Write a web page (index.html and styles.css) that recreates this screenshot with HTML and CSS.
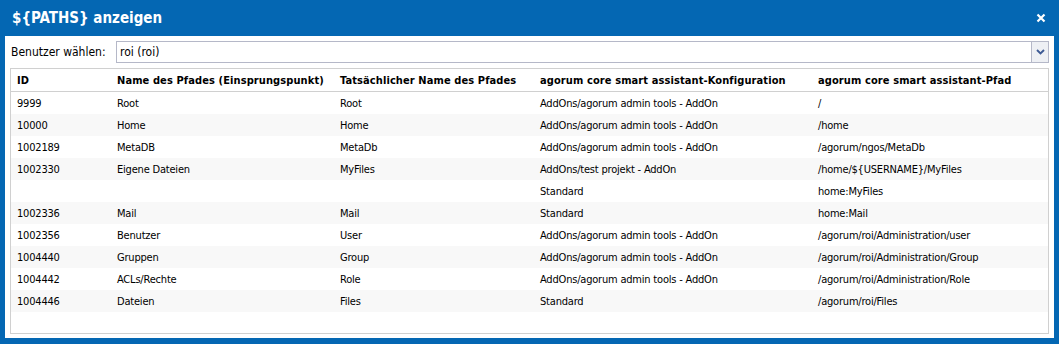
FILE: index.html
```html
<!DOCTYPE html>
<html lang="de">
<head>
<meta charset="utf-8">
<title>${PATHS} anzeigen</title>
<link rel="stylesheet" href="styles.css">
</head>
<body>
<div class="window">
  <div class="titlebar">
    <span class="title">${PATHS} anzeigen</span>
    <span class="close" aria-label="Schließen">
      <svg width="10" height="10" viewBox="0 0 10 10"><path d="M1.5 1.5 L8.5 8.5 M8.5 1.5 L1.5 8.5" stroke="#fff" stroke-width="2.2" stroke-linecap="butt"/></svg>
    </span>
  </div>
  <div class="panel">
    <div class="userrow">
      <label class="userlabel">Benutzer wählen:</label>
      <div class="combo">
        <span class="combo-value">roi (roi)</span>
        <span class="trigger">
          <svg width="9" height="6" viewBox="0 0 9 6"><path d="M1 1 L4.5 4.5 L8 1" fill="none" stroke="#3d5a94" stroke-width="1.9"/></svg>
        </span>
      </div>
    </div>
    <div class="grid">
      <div class="row head">
        <div class="cell">ID</div>
        <div class="cell">Name des Pfades (Einsprungspunkt)</div>
        <div class="cell">Tatsächlicher Name des Pfades</div>
        <div class="cell">agorum core smart assistant-Konfiguration</div>
        <div class="cell">agorum core smart assistant-Pfad</div>
      </div>
      <div class="row">
        <div class="cell">9999</div><div class="cell">Root</div><div class="cell">Root</div><div class="cell">AddOns/agorum admin tools - AddOn</div><div class="cell">/</div>
      </div>
      <div class="row alt">
        <div class="cell">10000</div><div class="cell">Home</div><div class="cell">Home</div><div class="cell">AddOns/agorum admin tools - AddOn</div><div class="cell">/home</div>
      </div>
      <div class="row">
        <div class="cell">1002189</div><div class="cell">MetaDB</div><div class="cell">MetaDb</div><div class="cell">AddOns/agorum admin tools - AddOn</div><div class="cell">/agorum/ngos/MetaDb</div>
      </div>
      <div class="row alt">
        <div class="cell">1002330</div><div class="cell">Eigene Dateien</div><div class="cell">MyFiles</div><div class="cell">AddOns/test projekt - AddOn</div><div class="cell">/home/${USERNAME}/MyFiles</div>
      </div>
      <div class="row">
        <div class="cell"></div><div class="cell"></div><div class="cell"></div><div class="cell">Standard</div><div class="cell">home:MyFiles</div>
      </div>
      <div class="row alt">
        <div class="cell">1002336</div><div class="cell">Mail</div><div class="cell">Mail</div><div class="cell">Standard</div><div class="cell">home:Mail</div>
      </div>
      <div class="row">
        <div class="cell">1002356</div><div class="cell">Benutzer</div><div class="cell">User</div><div class="cell">AddOns/agorum admin tools - AddOn</div><div class="cell">/agorum/roi/Administration/user</div>
      </div>
      <div class="row alt">
        <div class="cell">1004440</div><div class="cell">Gruppen</div><div class="cell">Group</div><div class="cell">AddOns/agorum admin tools - AddOn</div><div class="cell">/agorum/roi/Administration/Group</div>
      </div>
      <div class="row">
        <div class="cell">1004442</div><div class="cell">ACLs/Rechte</div><div class="cell">Role</div><div class="cell">AddOns/agorum admin tools - AddOn</div><div class="cell">/agorum/roi/Administration/Role</div>
      </div>
      <div class="row alt">
        <div class="cell">1004446</div><div class="cell">Dateien</div><div class="cell">Files</div><div class="cell">Standard</div><div class="cell">/agorum/roi/Files</div>
      </div>
    </div>
  </div>
</div>
</body>
</html>
```

FILE: styles.css
```css
html, body {
  margin: 0;
  padding: 0;
}
body {
  font-family: "DejaVu Sans Condensed", "DejaVu Sans", sans-serif;
  font-stretch: semi-condensed;
  color: #000;
  background: #fff;
}
.window {
  width: 1059px;
  height: 344px;
  background: #0467b3;
  display: flex;
  flex-direction: column;
  box-sizing: border-box;
}
.titlebar {
  height: 36px;
  flex: 0 0 36px;
  display: flex;
  align-items: center;
  justify-content: space-between;
  padding: 0 12px 0 12px;
  box-sizing: border-box;
}
.title {
  color: #fff;
  font-weight: bold;
  font-size: 15px;
}
.close {
  width: 10px;
  height: 10px;
  display: flex;
  margin-right: 1px;
}
.panel {
  flex: 1;
  margin: 0 5px 6px 5px;
  background: #fff;
  padding: 5px 5px 4px 5px;
  display: flex;
  flex-direction: column;
  gap: 5px;
  min-height: 0;
}
.userrow {
  display: flex;
  align-items: center;
  height: 22px;
  flex: 0 0 22px;
}
.userlabel {
  flex: 0 0 105px;
  font-size: 12px;
  padding-left: 1px;
}
.combo {
  flex: 1;
  height: 22px;
  box-sizing: border-box;
  border: 1px solid #b5b8c8;
  display: flex;
  align-items: stretch;
  background: #fff;
}
.combo-value {
  flex: 1;
  font-size: 12px;
  padding-left: 3px;
  display: flex;
  align-items: center;
}
.trigger {
  flex: 0 0 16px;
  border-left: 1px solid #b5b8c8;
  background: #eef0f4;
  display: flex;
  align-items: center;
  justify-content: center;
}
.grid {
  flex: 1;
  border: 1px solid #d0d0d0;
  font-size: 11px;
  min-height: 0;
}
.row {
  display: grid;
  grid-template-columns: 100px 223px 200px 278px 1fr;
  height: 22px;
  align-items: center;
  background: #fff;
}
.row.alt {
  background: #f8f8f8;
}
.row.head {
  font-weight: bold;
  border-bottom: 1px solid #d0d0d0;
  height: 22px;
}
.row.head .cell {
  letter-spacing: 0.1px;
}
.cell {
  padding-left: 6px;
  white-space: nowrap;
  overflow: hidden;
}
.row:not(.head) .cell {
  letter-spacing: -0.2px;
}
```
